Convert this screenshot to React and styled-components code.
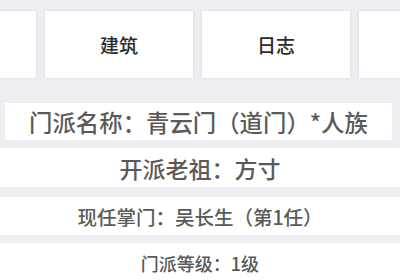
import React from "react";
import styled, { createGlobalStyle } from "styled-components";

const GlobalStyle = createGlobalStyle`
  html, body {
    margin: 0;
    padding: 0;
    background: #eeeef2;
    font-family: "Noto Sans CJK SC", "Noto Sans", sans-serif;
  }
`;

const Page = styled.div`
  width: 400px;
  height: 280px;
  overflow: hidden;
  background: #eeeef2;
`;

const TabStrip = styled.div`
  display: flex;
  gap: 9px;
  padding-top: 11px;
  margin-left: -112px;
`;

const Tab = styled.div`
  flex: 0 0 148px;
  height: 67px;
  display: flex;
  align-items: center;
  justify-content: center;
  background: #fff;
  box-shadow: 0 0 2px rgba(0, 0, 0, 0.12);
  color: #2a2a2a;
  font-size: 19px;
  font-weight: 500;
`;

const InfoList = styled.div`
  display: flex;
  flex-direction: column;
  margin-top: 25px;
`;

const InfoRow = styled.div`
  height: ${(p) => p.$h}px;
  margin: 0 ${(p) => (p.$inset ? "8px 0 5px" : "0")};
  margin-bottom: ${(p) => p.$gap}px;
  display: flex;
  align-items: center;
  justify-content: center;
  background: #fff;
  color: #5a5a5a;
  font-size: ${(p) => p.$size}px;
  font-weight: 500;
  white-space: nowrap;
`;

export default function App() {
  return (
    <Page>
      <GlobalStyle />
      <TabStrip>
        <Tab />
        <Tab>建筑</Tab>
        <Tab>日志</Tab>
        <Tab />
      </TabStrip>
      <InfoList>
        <InfoRow $inset $h={37} $gap={8} $size={23.4}>
          门派名称：青云门（道门）*人族
        </InfoRow>
        <InfoRow $h={39} $gap={10} $size={23}>
          开派老祖：方寸
        </InfoRow>
        <InfoRow $h={38} $gap={8} $size={19.5}>
          现任掌门：吴长生（第1任）
        </InfoRow>
        <InfoRow $h={40} $gap={0} $size={18}>
          门派等级：1级
        </InfoRow>
      </InfoList>
    </Page>
  );
}
